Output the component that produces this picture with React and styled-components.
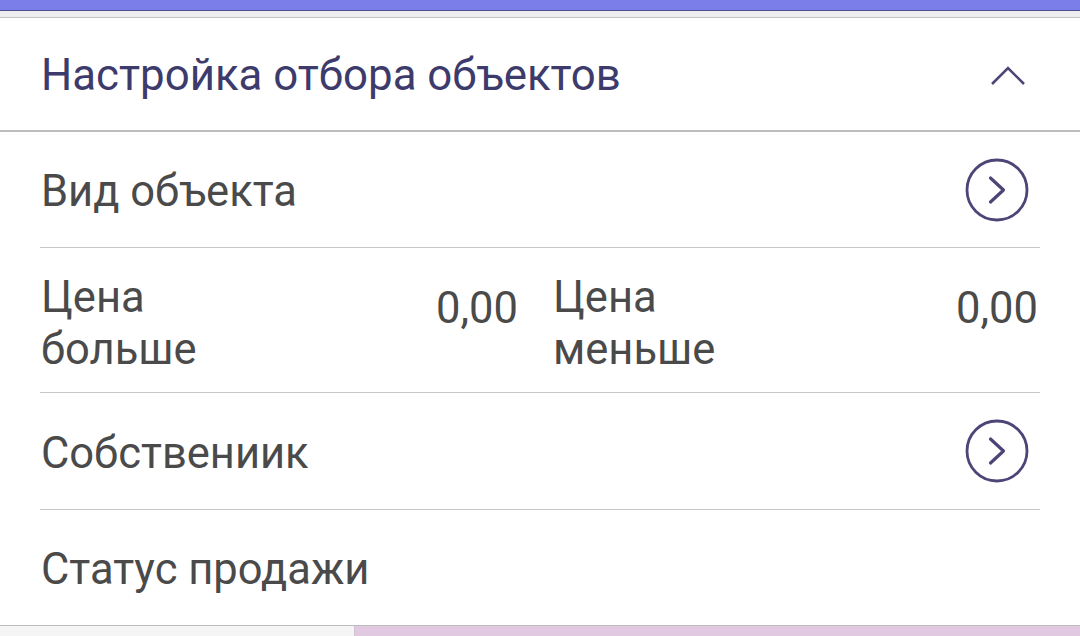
import React from 'react';
import styled, { createGlobalStyle } from 'styled-components';

const Global = createGlobalStyle`
  html, body {
    margin: 0;
    padding: 0;
    background: #ffffff;
  }
  body {
    font-family: Roboto, "Noto Sans", sans-serif;
  }
`;

const Screen = styled.div`
  width: 1080px;
  height: 636px;
  display: flex;
  flex-direction: column;
  overflow: hidden;
  background: #ffffff;
`;

const AppBar = styled.div`
  height: 10px;
  background: #7b7de8;
  border-bottom: 1px solid #4d4f8c;
`;

const Strip = styled.div`
  height: 6px;
  background: #eeeef1;
  border-bottom: 1px solid #c4c4c4;
`;

const Header = styled.div`
  height: 114px;
  display: flex;
  align-items: center;
  justify-content: space-between;
  padding: 0 40px 0 41px;
  border-bottom: 2px solid #bdbdbd;
`;

const HeaderTitle = styled.div`
  font-size: 43.8px;
  color: #3d3a6c;
  padding-top: 2px;
`;

const ChevronBox = styled.div`
  width: 64px;
  height: 40px;
  display: flex;
  align-items: center;
  justify-content: center;
  padding-top: 4px;
`;

const List = styled.div`
  flex: 1;
  display: flex;
  flex-direction: column;
  padding: 0 40px;
`;

const Row = styled.div`
  height: ${p => p.$h}px;
  display: flex;
  align-items: center;
  justify-content: space-between;
  border-bottom: ${p => (p.$last ? 'none' : '1px solid #c6c6c6')};
`;

const Label = styled.div`
  font-size: 43.5px;
  color: #4a4a4a;
  padding-left: 1px;
  padding-top: 4px;
`;

const IconBox = styled.div`
  width: 64px;
  height: 64px;
  margin-right: 11px;
  display: flex;
  align-items: center;
  justify-content: center;
`;

const PriceRow = styled.div`
  height: 144px;
  display: grid;
  grid-template-columns: 482px 1fr;
  column-gap: 30px;
  border-bottom: 1px solid #c6c6c6;
`;

const PriceCell = styled.div`
  display: flex;
  justify-content: space-between;
  align-items: flex-start;
  padding-top: 24px;
`;

const PriceLabel = styled.div`
  width: 200px;
  font-size: 43.5px;
  line-height: 52px;
  color: #4a4a4a;
  padding-left: 1px;
`;

const PriceValue = styled.div`
  font-size: 43.5px;
  line-height: 52px;
  color: #4a4a4a;
  padding-top: 11px;
  margin-right: ${p => p.$mr}px;
`;

const BottomBar = styled.div`
  height: 10px;
  display: flex;
  border-top: 1px solid #bdbdbd;
`;

const BottomTab = styled.div`
  width: ${p => p.$w};
  flex: ${p => (p.$w ? 'none' : 1)};
  background: ${p => p.$bg};
  border-left: ${p => (p.$sep ? '1px solid #d0c4d0' : 'none')};
`;

const ChevronUp = () => (
  <svg width="40" height="24" viewBox="0 0 40 24">
    <path d="M4 20 L20 4 L36 20" fill="none" stroke="#4b4677" strokeWidth="2.6" />
  </svg>
);

const CircleNext = () => (
  <svg width="64" height="64" viewBox="0 0 64 64">
    <circle cx="32" cy="32" r="30" fill="none" stroke="#4b4677" strokeWidth="2.8" />
    <path d="M25.5 20 L38.5 32 L25.5 44" fill="none" stroke="#4b4677" strokeWidth="3.2" strokeLinecap="round" strokeLinejoin="round" />
  </svg>
);

export default function App() {
  return (
    <Screen>
      <Global />
      <AppBar />
      <Strip />
      <Header>
        <HeaderTitle>Настройка отбора объектов</HeaderTitle>
        <ChevronBox>
          <ChevronUp />
        </ChevronBox>
      </Header>
      <List>
        <Row $h={115}>
          <Label>Вид объекта</Label>
          <IconBox>
            <CircleNext />
          </IconBox>
        </Row>
        <PriceRow>
          <PriceCell>
            <PriceLabel>Цена больше</PriceLabel>
            <PriceValue $mr={4}>0,00</PriceValue>
          </PriceCell>
          <PriceCell>
            <PriceLabel>Цена меньше</PriceLabel>
            <PriceValue $mr={2}>0,00</PriceValue>
          </PriceCell>
        </PriceRow>
        <Row $h={116}>
          <Label>Собствениик</Label>
          <IconBox>
            <CircleNext />
          </IconBox>
        </Row>
        <Row $h={115} $last>
          <Label>Статус продажи</Label>
        </Row>
      </List>
      <BottomBar>
        <BottomTab $w="354px" $bg="#f5f5f5" />
        <BottomTab $bg="#e2c9e2" $sep />
      </BottomBar>
    </Screen>
  );
}
